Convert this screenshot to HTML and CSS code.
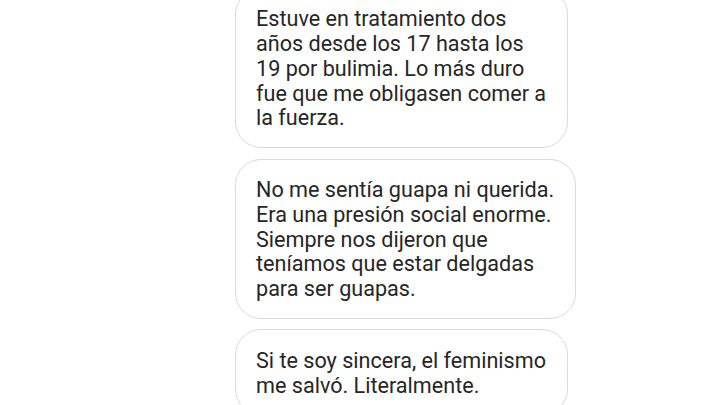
FILE: index.html
```html
<!DOCTYPE html>
<html lang="es">
<head>
<meta charset="utf-8">
<link rel="stylesheet" href="styles.css">
</head>
<body>
<div class="thread">
  <div class="bubble">Estuve en tratamiento dos<br>años desde los 17 hasta los<br>19 por bulimia. Lo más duro<br>fue que me obligasen comer a<br>la fuerza.</div>
  <div class="bubble">No me sentía guapa ni querida.<br>Era una presión social enorme.<br>Siempre nos dijeron que<br>teníamos que estar delgadas<br>para ser guapas.</div>
  <div class="bubble">Si te soy sincera, el feminismo<br>me salvó. Literalmente.</div>
</div>
</body>
</html>
```

FILE: styles.css
```css
html, body {
  margin: 0;
  padding: 0;
  background: #ffffff;
  overflow: hidden;
}
body {
  width: 720px;
  height: 405px;
}
.thread {
  display: flex;
  flex-direction: column;
  align-items: flex-start;
  gap: 10.5px;
  padding-left: 235px;
  margin-top: -12.25px;
}
.bubble {
  border: 1px solid #dbdbdb;
  border-radius: 26px;
  padding: 18.5px 21px 16px 20px;
  font-family: Roboto, "Noto Sans", sans-serif;
  font-size: 21.6px;
  line-height: 24.75px;
  color: #262626;
  white-space: nowrap;
}
```
